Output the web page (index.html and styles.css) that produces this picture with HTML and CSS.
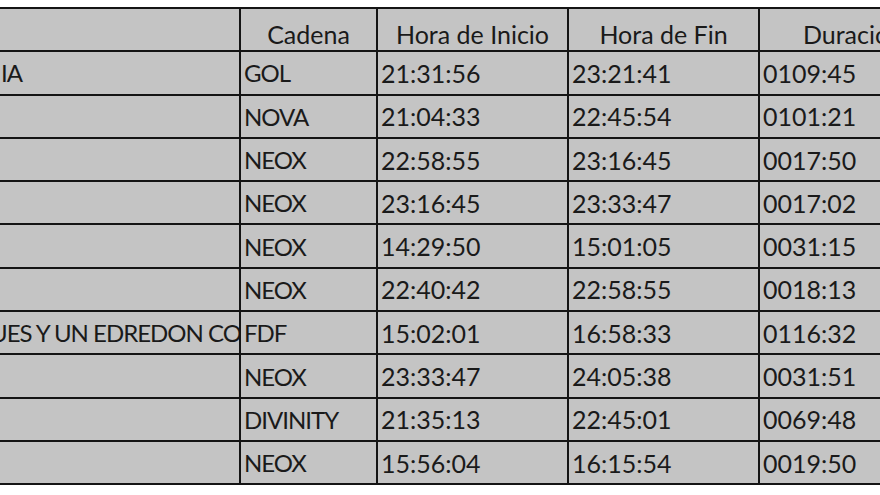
FILE: index.html
```html
<!DOCTYPE html>
<html>
<head>
<meta charset="utf-8">
<link rel="stylesheet" href="styles.css">
</head>
<body>
<div class="sheet">
  <div class="grid">
    <div class="cell head"></div>
    <div class="cell head">Cadena</div>
    <div class="cell head">Hora de Inicio</div>
    <div class="cell head">Hora de Fin</div>
    <div class="cell head dur">Duración</div>

    <div class="cell first caps">IA</div><div class="cell caps">GOL</div><div class="cell">21:31:56</div><div class="cell">23:21:41</div><div class="cell">0109:45</div>
    <div class="cell first"></div><div class="cell caps">NOVA</div><div class="cell">21:04:33</div><div class="cell">22:45:54</div><div class="cell">0101:21</div>
    <div class="cell first"></div><div class="cell caps">NEOX</div><div class="cell">22:58:55</div><div class="cell">23:16:45</div><div class="cell">0017:50</div>
    <div class="cell first"></div><div class="cell caps">NEOX</div><div class="cell">23:16:45</div><div class="cell">23:33:47</div><div class="cell">0017:02</div>
    <div class="cell first"></div><div class="cell caps">NEOX</div><div class="cell">14:29:50</div><div class="cell">15:01:05</div><div class="cell">0031:15</div>
    <div class="cell first"></div><div class="cell caps">NEOX</div><div class="cell">22:40:42</div><div class="cell">22:58:55</div><div class="cell">0018:13</div>
    <div class="cell first caps cut">UES Y UN EDREDON CON</div><div class="cell caps">FDF</div><div class="cell">15:02:01</div><div class="cell">16:58:33</div><div class="cell">0116:32</div>
    <div class="cell first"></div><div class="cell caps">NEOX</div><div class="cell">23:33:47</div><div class="cell">24:05:38</div><div class="cell">0031:51</div>
    <div class="cell first"></div><div class="cell caps">DIVINITY</div><div class="cell">21:35:13</div><div class="cell">22:45:01</div><div class="cell">0069:48</div>
    <div class="cell first"></div><div class="cell caps">NEOX</div><div class="cell">15:56:04</div><div class="cell">16:15:54</div><div class="cell">0019:50</div>
  </div>
</div>
</body>
</html>
```

FILE: styles.css
```css
html, body {
  margin: 0;
  padding: 0;
  background: #ffffff;
  overflow: hidden;
}
.sheet {
  width: 880px;
  height: 495px;
  padding-top: 7px;
  box-sizing: border-box;
  overflow: hidden;
}
.grid {
  display: grid;
  grid-template-columns: 239px 135px 189px 189px 196px;
  grid-auto-rows: 41.3px;
  gap: 2px;
  background: #141414;
  padding: 2px 2px 2px 0;
  width: max-content;
  font-family: Lato, "Open Sans", sans-serif;
  font-size: 25px;
  color: #1a1a1a;
}
.cell {
  background: #c4c4c4;
  display: flex;
  align-items: center;
  padding-left: 3px;
  white-space: nowrap;
  overflow: hidden;
}
.head {
  justify-content: center;
  padding-left: 0;
  padding-top: 8px;
  box-sizing: border-box;
}
.dur {
  padding-right: 10px;
}
.caps {
  font-size: 24px;
  letter-spacing: -1px;
}
.first {
  padding-left: 1px;
}
.cut {
  padding-left: 0;
  text-indent: -10px;
}
```
